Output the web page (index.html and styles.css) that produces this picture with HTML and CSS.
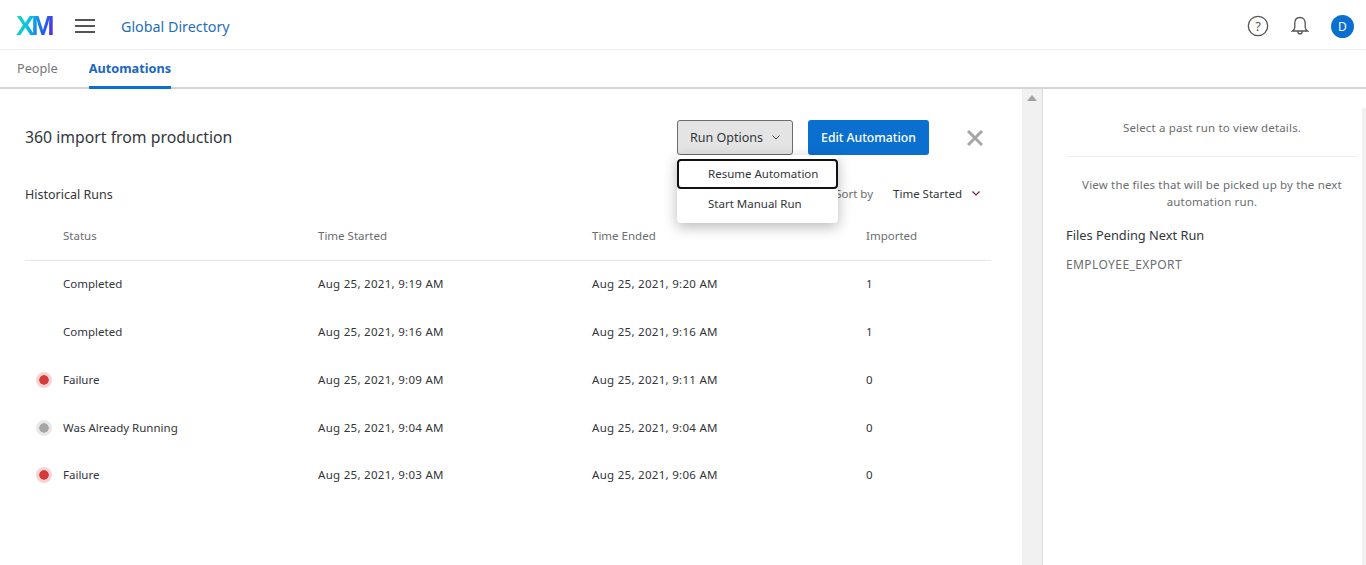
FILE: index.html
```html
<!DOCTYPE html>
<html lang="en">
<head>
    <meta charset="UTF-8">
    <title>Global Directory</title>
    <link rel="stylesheet" href="styles.css">
</head>
<body>
    <header class="topbar">
        <span class="logo">XM</span>
        <svg class="menu-icon" width="20" height="14" viewBox="0 0 20 14"><path d="M0 1h20M0 7h20M0 13h20" stroke="#555" stroke-width="2"/></svg>
        <span class="app-title">Global Directory</span>
        <div class="topbar-icons">
            <svg width="22" height="22" viewBox="0 0 22 22"><circle cx="11" cy="11" r="9.7" fill="none" stroke="#555" stroke-width="1.3"/><text x="11" y="15.500" text-anchor="middle" class="help-mark">?</text></svg>
            <svg width="18" height="20" viewBox="0 0 18 20"><path d="M9 1.500c-3.400 0-5.200 2.600-5.200 5.800v4.200c0 1.600-1 2.600-2.400 3.500h15.200c-1.400-.9-2.400-1.900-2.400-3.500V7.300c0-3.200-1.800-5.800-5.200-5.800zM6.800 15.200c0 3.600 4.400 3.600 4.400 0" fill="none" stroke="#555" stroke-width="1.3"/></svg>
            <span class="avatar">D</span>
        </div>
    </header>

    <nav class="tabs">
        <a class="tab">People</a>
        <a class="tab active">Automations</a>
    </nav>

    <div class="page">
        <main class="main">
            <div class="title-row">
                <h1>360 import from production</h1>
                <button class="btn btn-options">Run Options
                    <svg width="8" height="5" viewBox="0 0 8 5"><path d="M.5.5 4 4 7.500.5" fill="none" stroke="#444"/></svg>
                </button>
                <button class="btn btn-primary">Edit Automation</button>
                <svg class="close-icon" width="16" height="16" viewBox="0 0 16 16"><path d="M1 1l14 14M15 1 1 15" stroke="#a6a6a6" stroke-width="3"/></svg>
            </div>

            <div class="menu">
                <div class="menu-item focused">Resume Automation</div>
                <div class="menu-item">Start Manual Run</div>
            </div>

            <div class="runs-row">
                <h2>Historical Runs</h2>
                <div class="sort">
                    <span class="sort-label">Sort by</span>
                    <span class="sort-value">Time Started</span>
                    <svg width="8" height="5" viewBox="0 0 8 5"><path d="M.5.5 4 4 7.500.5" fill="none" stroke="#6b2b3a" stroke-width="1.2"/></svg>
                </div>
            </div>

            <div class="table">
                <div class="row head">
                    <span></span><span>Status</span><span>Time Started</span><span>Time Ended</span><span>Imported</span>
                </div>
                <div class="row">
                    <span></span><span>Completed</span><span class="date">Aug 25, 2021, 9:19 AM</span><span class="date">Aug 25, 2021, 9:20 AM</span><span>1</span>
                </div>
                <div class="row">
                    <span></span><span>Completed</span><span class="date">Aug 25, 2021, 9:16 AM</span><span class="date">Aug 25, 2021, 9:16 AM</span><span>1</span>
                </div>
                <div class="row">
                    <span class="dot red"></span><span>Failure</span><span class="date">Aug 25, 2021, 9:09 AM</span><span class="date">Aug 25, 2021, 9:11 AM</span><span>0</span>
                </div>
                <div class="row">
                    <span class="dot grey"></span><span>Was Already Running</span><span class="date">Aug 25, 2021, 9:04 AM</span><span class="date">Aug 25, 2021, 9:04 AM</span><span>0</span>
                </div>
                <div class="row last">
                    <span class="dot red"></span><span>Failure</span><span class="date">Aug 25, 2021, 9:03 AM</span><span class="date">Aug 25, 2021, 9:06 AM</span><span>0</span>
                </div>
            </div>
        </main>

        <div class="scrollbar"><span class="arrow-up"></span></div>

        <aside class="side">
            <p class="side-note first">Select a past run to view details.</p>
            <hr class="side-rule">
            <p class="side-note">View the files that will be picked up by the next automation run.</p>
            <h3>Files Pending Next Run</h3>
            <p class="file-name">EMPLOYEE_EXPORT</p>
        </aside>

        <div class="outer-scroll"></div>
    </div>
</body>
</html>
```

FILE: styles.css
```css
* {
    box-sizing: border-box;
}
html, body {
    height: 100%;
    overflow: hidden;
}
body {
    margin: 0;
    font-family: "Noto Sans", "Open Sans", Arial, sans-serif;
    font-size: 11.5px;
    color: #32363a;
    background-color: white;
    display: flex;
    flex-direction: column;
}
.topbar {
    height: 50px;
    flex: none;
    display: flex;
    align-items: center;
    padding: 3px 12px 0 16px;
    border-bottom: 1px solid #eeeeee;
}
.logo {
    font-family: "Liberation Sans", Arial, sans-serif;
    font-size: 28px;
    font-weight: bold;
    letter-spacing: -3.5px;
    width: 38px;
    background: linear-gradient(105deg, #1fe0a0, #08c0e8 35%, #1a70e8 65%, #5a28e0 92%);
    -webkit-background-clip: text;
    background-clip: text;
    color: transparent;
}
.menu-icon {
    margin-left: 21px;
}
.app-title {
    margin-left: 26px;
    font-size: 14.3px;
    color: #1f6fb8;
}
.topbar-icons {
    margin-left: auto;
    display: flex;
    align-items: center;
    gap: 22px;
}
.help-mark {
    font-family: "Noto Sans", sans-serif;
    font-size: 13px;
    fill: #555;
}
.avatar {
    width: 23px;
    height: 23px;
    border-radius: 50%;
    background-color: #0b6fd0;
    color: white;
    font-size: 12px;
    display: flex;
    align-items: center;
    justify-content: center;
}
.tabs {
    height: 39px;
    flex: none;
    display: flex;
    gap: 31px;
    padding-left: 17px;
    border-bottom: 2px solid #d4d4d4;
}
.tab {
    font-size: 12.7px;
    line-height: 36px;
    height: 39px;
    color: #74777a;
}
.tab.active {
    color: #1a66c0;
    font-weight: bold;
    border-bottom: 3px solid #0b6fd0;
}
.page {
    flex: 1;
    display: flex;
    min-height: 0;
}
.main {
    width: 1022px;
    flex: none;
    padding: 0 31px 0 25px;
    position: relative;
}
.title-row {
    height: 35px;
    margin-top: 31px;
    display: flex;
    align-items: center;
}
h1 {
    margin: 0 auto 0 0;
    padding-bottom: 2px;
    font-size: 15.8px;
    font-weight: normal;
    color: #32363a;
}
.btn {
    height: 35px;
    font-family: inherit;
    font-size: 12.5px;
    border-radius: 3px;
    cursor: pointer;
}
.btn-options {
    width: 116px;
    background-color: #e4e4e4;
    border: 1px solid #6a6d70;
    color: #32363a;
    display: flex;
    align-items: center;
    justify-content: center;
    gap: 9px;
}
.btn-primary {
    width: 121px;
    margin-left: 15px;
    background-color: #0b6fd0;
    border: none;
    color: white;
    font-size: 12.2px;
    font-weight: 500;
}
.close-icon {
    margin: 0 8px 0 38px;
}
.menu {
    position: absolute;
    z-index: 2;
    left: 677px;
    top: 66px;
    width: 161px;
    height: 68px;
    padding-top: 4px;
    background-color: white;
    border-radius: 4px;
    box-shadow: 0 4px 14px rgba(0,0,0,0.28);
}
.menu-item {
    height: 30px;
    line-height: 25px;
    padding-left: 29px;
    border: 2px solid transparent;
    color: #32363a;
}
.menu-item.focused {
    border-color: #111;
    border-radius: 4px;
}
.runs-row {
    height: 20px;
    margin-top: 29px;
    display: flex;
    align-items: center;
}
h2 {
    margin: 0 auto 0 0;
    font-size: 12.5px;
    font-weight: normal;
    color: #32363a;
}
.sort {
    display: flex;
    align-items: center;
    padding: 0 11px 2px 0;
}
.sort-label {
    color: #6a6d70;
    margin-right: 20px;
}
.sort-value {
    margin-right: 10px;
}
.table {
    margin-top: 9px;
}
.row {
    display: grid;
    grid-template-columns: 38px 255px 274px 274px 1fr;
    align-items: center;
    height: 48px;
    padding-bottom: 4px;
}
.row.head {
    padding-bottom: 3px;
    color: #6a6d70;
    border-bottom: 1px solid #e5e5e5;
}
.row.last {
    margin-top: -1px;
}
.date {
    letter-spacing: 0.29px;
}
.dot {
    width: 16px;
    height: 16px;
    margin: 2px 0 0 11px;
    border-radius: 50%;
    border: 3px solid;
    background-clip: padding-box;
}
.dot.red {
    background-color: #d63a3a;
    border-color: #f6d4d4;
}
.dot.grey {
    background-color: #a6a6a6;
    border-color: #e8e8e8;
}
.scrollbar {
    width: 20px;
    flex: none;
    background-color: #f1f1f1;
    display: flex;
    justify-content: center;
    padding-top: 6px;
}
.arrow-up {
    width: 0;
    height: 0;
    border-left: 5px solid transparent;
    border-right: 5px solid transparent;
    border-bottom: 6px solid #a3a3a3;
}
.side {
    flex: 1;
    border-left: 1px solid #dddddd;
    padding: 0 4px 0 23px;
}
.side-note {
    margin: 0;
    text-align: center;
    color: #6a6d70;
    line-height: 17px;
    letter-spacing: 0.17px;
}
.side-note.first {
    margin-top: 30px;
}
.side-rule {
    border: none;
    border-top: 1px solid #eeeeee;
    margin: 20px 0 19px;
}
h3 {
    margin: 16px 0 0;
    font-size: 12.8px;
    font-weight: normal;
    color: #32363a;
}
.file-name {
    margin: 12px 0 0;
    font-size: 12px;
    letter-spacing: 0.4px;
    color: #6a6d70;
}
.outer-scroll {
    width: 4px;
    flex: none;
    margin-top: 19px;
    background-color: #f1f1f1;
}
```
